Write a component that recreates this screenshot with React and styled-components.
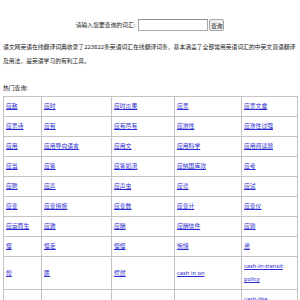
import React from "react";
import styled, { createGlobalStyle } from "styled-components";

const GlobalStyle = createGlobalStyle`
  body {
    margin: 0;
    background: #fff;
    font-family: "Noto Sans", "Noto Sans CJK SC", sans-serif;
    font-size: 5.8px;
    color: #222;
  }
`;

const hotWords = [
    ["应敌", "应时", "应时瓜果", "应景", "应景文章"],
    ["应景诗", "应有", "应有尽有", "应激性", "应激性过强"],
    ["应用", "应用导向语言", "应用文", "应用科学", "应用阅读题"],
    ["应当", "应答", "应答如流", "应纳国库款", "应考"],
    ["应聘", "应声", "应声虫", "应诊", "应试"],
    ["应变", "应变措施", "应变数", "应变计", "应变仪"],
    ["应运而生", "应邀", "应酬", "应酬信件", "应验"],
    ["慢", "慢走", "慢慢", "惋惜", "懑"],
    ["惶", "匮", "愕然", "cash in on", "cash-in-transit policy"],
    ["cashless", "cashless society", "cash letter", "cash letter of credit", "cash-like instrument"],
];

const colWidths = [38, 70, 63, 67, 56];

const App = () => {
    return (
        <Page>
            <GlobalStyle />
            <SearchBar onSubmit={(e) => e.preventDefault()}>
                <Label>请输入您要查询的词汇:</Label>
                <SearchInput type="text" />
                <SearchButton type="submit">查询</SearchButton>
            </SearchBar>
            <Intro>
                语文网英语在线翻译词典收录了223822条英语词汇在线翻译词条，基本涵盖了全部常用英语词汇的中英文双语翻译及用法，是英语学习的有利工具。
            </Intro>
            <HotTitle>热门查询:</HotTitle>
            <WordTable>
                <colgroup>
                    {colWidths.map((w, i) => (
                        <Col key={i} $width={w} />
                    ))}
                </colgroup>
                <tbody>
                    {hotWords.map((row, r) => (
                        <tr key={r}>
                            {row.map((word) => (
                                <Cell key={word}>
                                    <WordLink href="#">{word}</WordLink>
                                </Cell>
                            ))}
                        </tr>
                    ))}
                </tbody>
            </WordTable>
        </Page>
    );
};

const Page = styled.div`
  padding: 0 3px;
  width: 294px;
`;

const SearchBar = styled.form`
  display: flex;
  justify-content: center;
  align-items: center;
  margin: 19px 0 0;
  height: 12px;
`;

const Label = styled.span`
  line-height: 12px;
`;

const SearchInput = styled.input`
  box-sizing: border-box;
  width: 70px;
  height: 12px;
  margin: 0 1px 0 3px;
  padding: 0 2px;
  border: 1px solid #a9a9a9;
  border-top-color: #8f8f8f;
  font-size: 5.8px;
  outline: none;
`;

const SearchButton = styled.button`
  box-sizing: border-box;
  width: 15px;
  height: 12px;
  padding: 0;
  font-family: inherit;
  font-size: 5.8px;
  color: #222;
  background: #efefef;
  border: 1px solid #a6a6a6;
  border-radius: 2px;
`;

const Intro = styled.p`
  margin: 9px 0 0;
  line-height: 14px;
`;

const HotTitle = styled.div`
  margin-top: 13px;
  line-height: 14px;
`;

const WordTable = styled.table`
  margin-top: 1px;
  width: 294px;
  table-layout: fixed;
  border-collapse: collapse;
`;

const Col = styled.col`
  width: ${(p) => p.$width}px;
`;

const Cell = styled.td`
  padding: 3px 2px;
  line-height: 13px;
  vertical-align: middle;
  border: 1px solid #c4c4c4;
`;

const WordLink = styled.a`
  color: #2b2bd0;
  text-decoration: underline;
`;

export default App;
